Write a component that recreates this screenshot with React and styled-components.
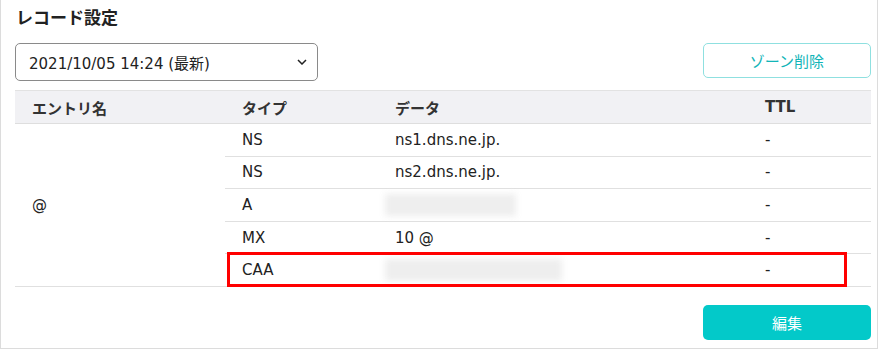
import React from "react";
import styled, { createGlobalStyle } from "styled-components";

const GlobalStyle = createGlobalStyle`
  body {
    margin: 0;
    background: #fff;
    font-family: "DejaVu Sans", "Noto Sans CJK JP", sans-serif;
    color: #333;
  }
`;

const records = [
  { type: "NS", data: "ns1.dns.ne.jp.", ttl: "-" },
  { type: "NS", data: "ns2.dns.ne.jp.", ttl: "-" },
  { type: "A", blur: 131, ttl: "-" },
  { type: "MX", data: "10 @", ttl: "-" },
  { type: "CAA", blur: 177, ttl: "-" },
];

const App = () => {
  return (
    <Wrapper>
      <GlobalStyle />
      <Title>レコード設定</Title>
      <Toolbar>
        <SelectBox>
          <span>2021/10/05 14:24 (最新)</span>
          <svg width="10" height="6" viewBox="0 0 10 6">
            <path d="M1 1l4 4 4-4" fill="none" stroke="#222" strokeWidth="1.5" />
          </svg>
        </SelectBox>
        <OutlineButton>ゾーン削除</OutlineButton>
      </Toolbar>
      <TableWrap>
        <Table>
          <colgroup>
            <col style={{ width: 210 }} />
            <col style={{ width: 153 }} />
            <col style={{ width: 370 }} />
            <col />
          </colgroup>
          <thead>
            <tr>
              <Th>エントリ名</Th>
              <Th>タイプ</Th>
              <Th>データ</Th>
              <Th>TTL</Th>
            </tr>
          </thead>
          <tbody>
            {records.map((r, i) => (
              <tr key={i}>
                {i === 0 && <EntryCell rowSpan={records.length}>@</EntryCell>}
                <Td>{r.type}</Td>
                <Td>{r.blur ? <Blurred style={{ width: r.blur }} /> : r.data}</Td>
                <Td>{r.ttl}</Td>
              </tr>
            ))}
          </tbody>
        </Table>
        <Highlight />
      </TableWrap>
      <Footer>
        <PrimaryButton>編集</PrimaryButton>
      </Footer>
    </Wrapper>
  );
};

const Wrapper = styled.div`
  width: 856px;
  height: 348px;
  padding: 0 6px 0 14px;
  border: 1px solid #dcdcdc;
  border-top: none;
`;

const Title = styled.h2`
  margin: 0;
  padding: 4px 0 0 1px;
  height: 39px;
  font-family: "Noto Sans CJK JP", sans-serif;
  font-size: 17px;
  font-weight: 700;
  color: #222;
  line-height: 25px;
  box-sizing: border-box;
  height: 43px;
`;

const Toolbar = styled.div`
  display: flex;
  justify-content: space-between;
  align-items: flex-start;
`;

const SelectBox = styled.div`
  box-sizing: border-box;
  width: 303px;
  height: 38px;
  border: 1px solid #8a8a8a;
  border-radius: 5px;
  display: flex;
  align-items: center;
  justify-content: space-between;
  padding: 0 10px 0 13px;
  font-size: 15px;
  color: #222;
`;

const OutlineButton = styled.button`
  box-sizing: border-box;
  width: 168px;
  height: 35px;
  border: 1px solid #8fe0e0;
  border-radius: 5px;
  background: #fff;
  color: #12b5b8;
  font-family: "Noto Sans CJK JP", sans-serif;
  font-size: 15px;
`;

const TableWrap = styled.div`
  position: relative;
  margin-top: 9px;
`;

const Table = styled.table`
  width: 856px;
  border-collapse: collapse;
  table-layout: fixed;
  font-size: 15px;
`;

const Th = styled.th`
  background: #f1f1f4;
  height: 32px;
  padding: 0 17px;
  text-align: left;
  font-weight: 700;
  color: #333;
  border-top: 1px solid #e2e2e2;
  border-bottom: 1px solid #dedede;
`;

const Td = styled.td`
  height: 31.6px;
  padding: 0 17px;
  border-bottom: 1px solid #e0e0e0;
  color: #222;
`;

const EntryCell = styled(Td)`
  vertical-align: middle;
`;

const Blurred = styled.div`
  height: 22px;
  margin-left: -10px;
  background: #eeeeee;
  filter: blur(3px);
`;

const Highlight = styled.div`
  position: absolute;
  left: 212px;
  top: 162px;
  width: 614px;
  height: 29px;
  border: 3px solid #ff0000;
`;

const Footer = styled.div`
  display: flex;
  justify-content: flex-end;
  margin-top: 18px;
`;

const PrimaryButton = styled.button`
  width: 168px;
  height: 35px;
  border: none;
  border-radius: 5px;
  background: #03c9c9;
  color: #fff;
  font-family: "Noto Sans CJK JP", sans-serif;
  font-size: 15px;
`;

export default App;
